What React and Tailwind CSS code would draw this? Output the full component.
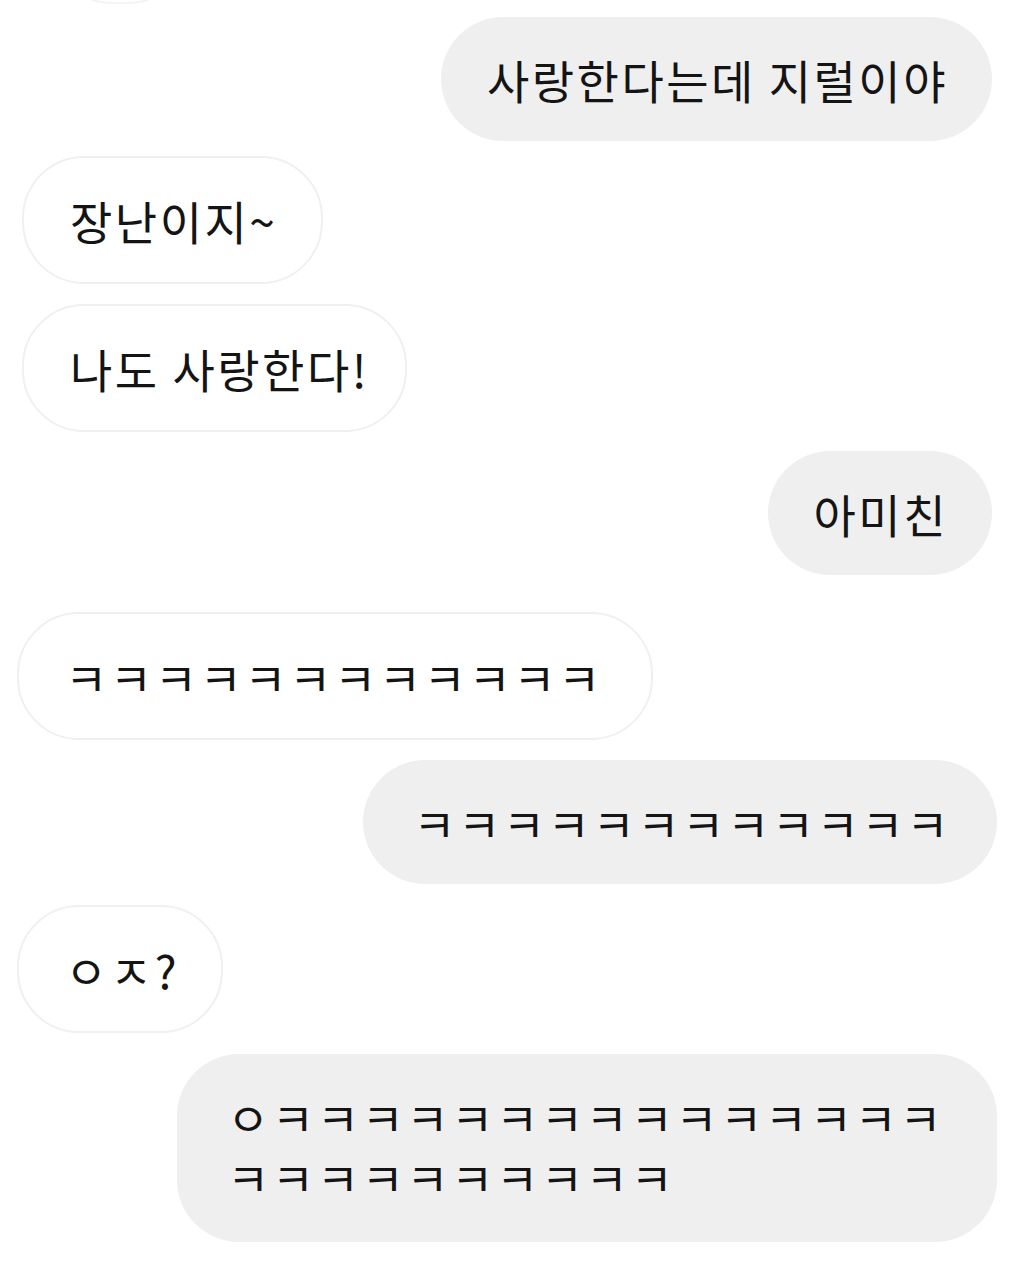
const font = {
  fontFamily: '"Noto Sans CJK KR", "Noto Sans", sans-serif',
};

const Bubble = ({ mine, className = "", children }) => (
  <div
    className={`px-[46px] py-[32px] text-[46px] leading-[60px] tracking-[2.5px] font-normal text-[#141414] whitespace-pre-line ${
      mine
        ? "self-end bg-[#efefef] rounded-[62px]"
        : "self-start bg-white border-2 border-[#f0f0f0] rounded-[62px]"
    } ${className}`}
  >
    {children}
  </div>
);

export default function App() {
  return (
    <div className="min-h-screen w-[1024px] bg-white overflow-hidden" style={font}>
      <div className="flex flex-col">
        {/* bottom edge of a previous bubble, cut off by the top */}
        <div className="ml-[50px] -mt-[120px] h-[124px] w-[140px] rounded-[62px] border-2 border-[#f4f4f4]" />

        <Bubble mine className="mt-[13px] mr-[32px] pr-[44px]">
          사랑한다는데 지럴이야
        </Bubble>
        <Bubble className="mt-[15px] ml-[22px] pr-[44px]">장난이지~</Bubble>
        <Bubble className="mt-[20px] ml-[22px] pr-[36px]">나도 사랑한다!</Bubble>
        <Bubble mine className="mt-[19px] mr-[32px] pr-[44px]">
          아미친
        </Bubble>
        <Bubble className="mt-[37px] ml-[17px] pr-[48px]">ㅋㅋㅋㅋㅋㅋㅋㅋㅋㅋㅋㅋ</Bubble>
        <Bubble mine className="mt-[20px] mr-[27px] pl-[50px] pr-[46px]">
          ㅋㅋㅋㅋㅋㅋㅋㅋㅋㅋㅋㅋ
        </Bubble>
        <Bubble className="mt-[21px] ml-[17px] pr-[42px]">ㅇㅈ?</Bubble>
        <Bubble mine className="mt-[21px] mr-[27px] w-[820px] pl-[50px] pt-[32px] pb-[36px] rounded-[60px]">
          {"ㅇㅋㅋㅋㅋㅋㅋㅋㅋㅋㅋㅋㅋㅋㅋㅋ\nㅋㅋㅋㅋㅋㅋㅋㅋㅋㅋ"}
        </Bubble>
      </div>
    </div>
  );
}
